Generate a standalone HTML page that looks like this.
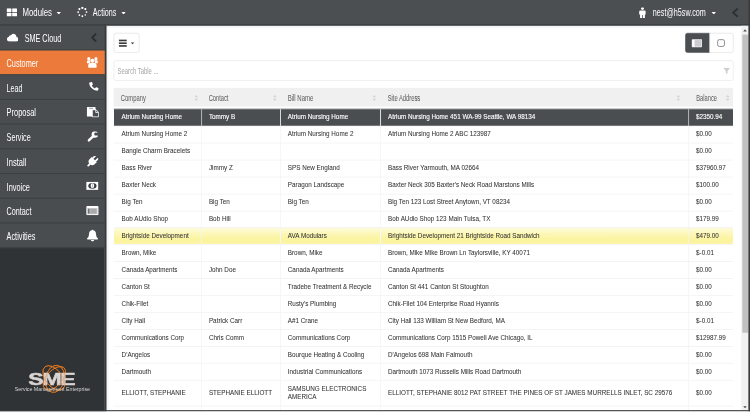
<!DOCTYPE html>
<html lang="en">
<head>
<meta charset="utf-8">
<title>SME Cloud - Customer</title>
<style>
html,body{margin:0;padding:0;width:750px;height:412px;overflow:hidden;background:#fff;}
body{font-family:"Liberation Sans",sans-serif;}
#app{-webkit-mask-image:linear-gradient(#000,#000);mask-image:linear-gradient(#000,#000);position:absolute;left:0;top:0;width:1366px;height:750px;transform:scale(0.54905);transform-origin:0 0;background:#fff;overflow:hidden;}
.cn{display:inline-block;transform:scaleX(var(--s,.7));transform-origin:0 50%;white-space:nowrap;}
/* top bar */
#top{position:absolute;left:0;top:0;width:1366px;height:47px;background:linear-gradient(to bottom,#4c4f52 0,#4c4f52 43.4px,#3f4245 43.4px,#3f4245 47px);color:#fff;font-size:18.5px;}
#top .it{position:absolute;top:0;height:47px;line-height:46px;}
#top svg{position:absolute;}
/* sidebar */
#side{position:absolute;left:0;top:47px;width:191px;height:703px;background:#2f3335;}
#sideR{position:absolute;left:191px;top:47px;width:2.7px;height:703px;background:#383b3e;}
#side .hd{position:relative;height:43px;border-bottom:2px solid #3d4043;background:#4b4e51;color:#fff;font-size:18.8px;line-height:48px;}
#side .mi{position:relative;height:43px;border-bottom:2px solid #3d4043;background:#4a4d50;color:#fff;font-size:18.8px;line-height:48px;}
#side .mi.act{background:#ec7a3a;}
#side .mi .cn,#side .hd .cn{position:absolute;left:12px;top:0;}
#side svg{position:absolute;}
/* main */
#main{position:absolute;left:193px;top:47px;width:1157px;height:701px;background:#fff;}
#shadowL{position:absolute;left:193.7px;top:47px;width:5px;height:700px;background:linear-gradient(to right,rgba(0,0,0,.06),rgba(0,0,0,0));}
#shadowT{position:absolute;left:193px;top:47px;width:1157px;height:4px;background:linear-gradient(to bottom,rgba(0,0,0,.07),rgba(0,0,0,0));}
.btn{position:absolute;box-sizing:border-box;border:1px solid #d9d9d9;border-radius:4px;background:#fff;}
#search{position:absolute;left:207px;top:110px;width:1129px;height:36.6px;box-sizing:border-box;border:1px solid #e2e2e2;border-radius:4px;color:#a5a5a5;font-size:16px;line-height:37px;}
#search .cn{position:absolute;left:6px;top:0;}
/* table */
#tbl{position:absolute;left:207px;top:160.3px;width:1128px;border-collapse:collapse;table-layout:fixed;font-size:11.5px;color:#333;-webkit-text-stroke:0.08px #333;}
#tbl th{height:38px;background:transparent;text-align:left;font-weight:normal;font-size:16px;color:#666;padding:0 0 0 13px;position:relative;}
#thbg{position:absolute;left:207px;top:159.5px;width:1128px;height:34.6px;background:#f0f0f0;}
#tbl td{height:29.29px;padding:0 0 0.6px 13px;border-top:1px solid #ececec;border-left:1px solid #efefef;white-space:nowrap;overflow:hidden;line-height:15px;}
#tbl td:first-child{border-left:none;padding-left:14.5px;}
#tbl tr.sel td{background:#4b4e51;color:#fff;-webkit-text-stroke:0.2px #fff;border-top-color:#4b4e51;border-left-color:#b8b8b8;}
#tbl tr.hl td{background:linear-gradient(to bottom,#fefcdc 0%,#fcf7b6 35%,#fbf39a 78%,#fcf6b4 100%);}
#tbl tr.tall td{height:45.6px;white-space:normal;line-height:15.6px;}
#tbl th svg{position:absolute;right:6px;top:13px;}
#tbl th .cn{position:relative;top:0.2px;}
/* scrollbar + frame */
#sb{position:absolute;left:1350px;top:47px;width:13px;height:700px;background:#f1f1f1;}
#sb .th{position:absolute;left:2px;top:16px;width:11px;height:543px;background:#c1c1c1;}
#frR{position:absolute;left:1363px;top:0;width:3px;height:750px;background:#3a3c3e;}
#frB{position:absolute;left:0;top:747px;width:1366px;height:2.4px;background:#3a3c3e;}
#frB2{position:absolute;left:0;top:749.2px;width:1366px;height:2px;background:#9a9a9a;}
</style>
</head>
<body>
<div id="app">

<div id="main"></div>
<div id="shadowT"></div>

<!-- toolbar -->
<div class="btn" style="left:207px;top:60px;width:47px;height:36px;">
  <svg width="47" height="36" viewBox="0 0 47 36" style="position:absolute;left:-1px;top:-1px">
    <rect x="9.6" y="12.2" width="14.2" height="3" fill="#3c3c3c"/><rect x="9.6" y="17.2" width="14.2" height="3" fill="#3c3c3c"/><rect x="9.6" y="22.2" width="14.2" height="3" fill="#3c3c3c"/>
    <path d="M31.2 17.2 L37.6 17.2 L34.4 20.8 Z" fill="#3c3c3c"/>
  </svg>
</div>
<div class="btn" style="left:1248.4px;top:60px;width:44.6px;height:36px;background:#4b4e51;border-color:#4b4e51;border-radius:4px 0 0 4px;">
  <svg width="44" height="36" viewBox="0 0 44 36" style="position:absolute;left:-1px;top:-1px">
    <rect x="12" y="11.4" width="18.6" height="14.6" rx="1.2" fill="#f2f2f2"/>
    <rect x="13.2" y="13.2" width="3" height="11.4" fill="#fff"/><rect x="17.4" y="13.2" width="12" height="11.4" fill="#c6c7c9"/>
    <path d="M17.4 16.1 H29.4 M17.4 19 H29.4 M17.4 21.9 H29.4" stroke="#dcdcdc" stroke-width=".8"/>
  </svg>
</div>
<div class="btn" style="left:1292px;top:60px;width:44px;height:36px;border-radius:0 4px 4px 0;">
  <svg width="44" height="36" viewBox="0 0 44 36" style="position:absolute;left:-1px;top:-1px">
    <rect x="15.1" y="12.2" width="12.4" height="12.4" rx="3" fill="none" stroke="#6a6d76" stroke-width="1.4"/>
  </svg>
</div>

<div id="search"><span class="cn" style="--s:.673">Search Table ...</span>
  <svg width="13" height="13" viewBox="0 0 16 16" style="position:absolute;right:5.5px;top:11.5px"><path d="M0.6 1 H15.4 L9.8 7.6 V15 L6.2 12.4 V7.6 Z" fill="#cdcdcd"/></svg>
</div>

<div id="thbg"></div>
<table id="tbl">
<colgroup><col style="width:160px"><col style="width:143.7px"><col style="width:182.5px"><col style="width:561px"><col style="width:80.8px"></colgroup>
<thead><tr>
<th><span class="cn" style="--s:.668">Company</span><svg width="7" height="11" viewBox="0 0 8 13" style="right:6.3px"><path d="M4 0 L8 5 H0 Z M4 13 L8 8 H0 Z" fill="#d2d2d2"/></svg></th>
<th><span class="cn" style="--s:.654">Contact</span><svg width="7" height="11" viewBox="0 0 8 13" style="right:6.9px"><path d="M4 0 L8 5 H0 Z M4 13 L8 8 H0 Z" fill="#d2d2d2"/></svg></th>
<th><span class="cn" style="--s:.681">Bill Name</span><svg width="7" height="11" viewBox="0 0 8 13" style="right:8.2px"><path d="M4 0 L8 5 H0 Z M4 13 L8 8 H0 Z" fill="#d2d2d2"/></svg></th>
<th><span class="cn" style="--s:.661">Site Address</span><svg width="7" height="11" viewBox="0 0 8 13" style="right:15.3px"><path d="M4 0 L8 5 H0 Z M4 13 L8 8 H0 Z" fill="#d2d2d2"/></svg></th>
<th><span class="cn" style="--s:.655;left:1px">Balance</span><svg width="7" height="11" viewBox="0 0 8 13" style="right:5.6px"><path d="M4 0 L8 5 H0 Z M4 13 L8 8 H0 Z" fill="#d2d2d2"/></svg></th>
</tr></thead>
<tbody>
<tr class="sel"><td>Atrium Nursing Home</td><td>Tommy B</td><td>Atrium Nursing Home</td><td>Atrium Nursing Home 451 WA-99 Seattle, WA 98134</td><td>$2350.94</td></tr>
<tr><td>Atrium Nursing Home 2</td><td></td><td>Atrium Nursing Home 2</td><td>Atrium Nursing Home 2 ABC 123987</td><td>$0.00</td></tr>
<tr><td>Bangle Charm Bracelets</td><td></td><td></td><td></td><td>$0.00</td></tr>
<tr><td>Bass River</td><td>Jimmy Z</td><td>SPS New England</td><td>Bass River Yarmouth, MA 02664</td><td>$37960.97</td></tr>
<tr><td>Baxter Neck</td><td></td><td>Paragon Landscape</td><td>Baxter Neck 305 Baxter's Neck Road Marstons Mills</td><td>$100.00</td></tr>
<tr><td>Big Ten</td><td>Big Ten</td><td>Big Ten</td><td>Big Ten 123 Lost Street Anytown, VT 08234</td><td>$0.00</td></tr>
<tr><td>Bob AUdio Shop</td><td>Bob Hill</td><td></td><td>Bob AUdio Shop 123 Main Tulsa, TX</td><td>$179.99</td></tr>
<tr class="hl"><td>Brightside Development</td><td></td><td>AVA Modulars</td><td>Brightside Development 21 Brightside Road Sandwich</td><td>$479.00</td></tr>
<tr><td>Brown, Mike</td><td></td><td>Brown, Mike</td><td>Brown, Mike Mike Brown Ln Taylorsville, KY 40071</td><td>$-0.01</td></tr>
<tr><td>Canada Apartments</td><td>John Doe</td><td>Canada Apartments</td><td>Canada Apartments</td><td>$0.00</td></tr>
<tr><td>Canton St</td><td></td><td>Tradebe Treatment &amp; Recycle</td><td>Canton St 441 Canton St Stoughton</td><td>$0.00</td></tr>
<tr><td>Chik-Filet</td><td></td><td>Rusty's Plumbing</td><td>Chik-Filet 104 Enterprise Road Hyannis</td><td>$0.00</td></tr>
<tr><td>City Hall</td><td>Patrick Carr</td><td>A#1 Crane</td><td>City Hall 133 William St New Bedford, MA</td><td>$-0.01</td></tr>
<tr><td>Communications Corp</td><td>Chris Comm</td><td>Communications Corp</td><td>Communications Corp 1515 Powell Ave Chicago, IL</td><td>$12987.99</td></tr>
<tr><td>D'Angelos</td><td></td><td>Bourque Heating &amp; Cooling</td><td>D'Angelos 698 Main Falmouth</td><td>$0.00</td></tr>
<tr><td>Dartmouth</td><td></td><td>Industrial Communications</td><td>Dartmouth 1073 Russells Mills Road Dartmouth</td><td>$0.00</td></tr>
<tr class="tall"><td>ELLIOTT, STEPHANIE</td><td>STEPHANIE ELLIOTT</td><td>SAMSUNG ELECTRONICS AMERICA</td><td>ELLIOTT, STEPHANIE 8012 PAT STREET THE PINES OF ST JAMES MURRELLS INLET, SC 29576</td><td>$0.00</td></tr>
<tr><td>&nbsp;</td><td></td><td></td><td></td><td></td></tr>
</tbody>
</table>

<!-- sidebar -->
<div style="position:absolute;left:0;top:40px;width:193px;height:60px;background:#45484b;"></div>
<div id="side">
  <div class="hd"><span class="cn" style="left:45px;--s:.70">SME Cloud</span>
    <svg style="left:12px;top:13.4px" width="21.4" height="15.6" viewBox="0 0 22 16"><path d="M5 16 A4.6 4.6 0 0 1 4.2 6.9 A3.6 3.6 0 0 1 8.4 4.2 A5.6 5.6 0 0 1 18.6 7.4 A4.3 4.3 0 0 1 17.6 16 Z" fill="#fff"/></svg>
    <svg style="left:164.6px;top:13px" width="12" height="17" viewBox="0 0 12 17"><path d="M10 1.4 L3 8.5 L10 15.6" fill="none" stroke="#2b2e30" stroke-width="3.3"/></svg>
  </div>
  <div class="mi act"><span class="cn" style="--s:.709">Customer</span>
    <svg style="left:157.5px;top:12px" width="20.6" height="19.5" viewBox="0 0 20.6 19.5">
      <circle cx="3.7" cy="2.9" r="2.9" fill="#fff"/><circle cx="16.8" cy="2.9" r="2.9" fill="#fff"/>
      <path d="M0 11 V8.4 Q0 5.6 2.6 5.6 H6.6 Q5 8 6.2 11 Z M20.6 11 V8.4 Q20.6 5.6 18 5.6 H14 Q15.6 8 14.4 11 Z" fill="#fff"/>
      <circle cx="10.3" cy="6.6" r="3.8" fill="#fff"/>
      <path d="M3.8 19.5 Q2.6 19.5 2.6 18.2 V15.4 Q2.6 10.9 6.6 10.9 H14 Q18 10.9 18 15.4 V18.2 Q18 19.5 16.8 19.5 Z" fill="#fff"/>
    </svg>
  </div>
  <div class="mi"><span class="cn" style="--s:.69">Lead</span>
    <svg style="left:161.5px;top:12px" width="18" height="16.5" viewBox="0 0 18 16.5"><path d="M1.2 1.4 L4.6 0.3 Q5.4 0.2 5.8 1 L7 4.4 Q7.2 5.2 6.5 5.8 L5 6.9 Q6.8 10.6 11 12 L12.3 10.4 Q12.9 9.8 13.7 10.1 L17 11.5 Q17.8 12 17.6 12.8 L16.6 15.4 Q16.3 16.3 15.2 16.3 Q9 16 4.6 11.4 Q0.6 7 0.4 2.6 Q0.4 1.7 1.2 1.4 Z" fill="#fff"/></svg>
  </div>
  <div class="mi"><span class="cn" style="--s:.723">Proposal</span>
    <svg style="left:157.5px;top:12.5px" width="22.6" height="19" viewBox="0 0 22.6 19">
      <rect x="0" y="0" width="16" height="17.4" rx="1.2" fill="#fff"/>
      <rect x="4.4" y="1.2" width="7" height="2.2" fill="#a4a6a8"/>
      <path d="M10 4.8 H16.8 L21.6 9.6 V18 H10 Z" fill="#4a4d50" stroke="#fff" stroke-width="1.7" stroke-linejoin="round"/>
      <path d="M16.4 5 V10 H21.4" fill="none" stroke="#fff" stroke-width="1.5"/>
    </svg>
  </div>
  <div class="mi"><span class="cn" style="--s:.70">Service</span>
    <svg style="left:159.4px;top:12.4px" width="21" height="20" viewBox="0 0 21 20">
      <path d="M11.4 8.6 L2.8 16.6" fill="none" stroke="#fff" stroke-width="4.6" stroke-linecap="round"/>
      <circle cx="13.8" cy="5.9" r="5.9" fill="#fff"/>
      <path d="M12.6 5.2 A2.5 2.5 0 0 1 16.6 3.0 L21 1.6 V8.2 L16.4 7.6 A2.5 2.5 0 0 1 12.6 5.2 Z" fill="#4a4d50"/>
    </svg>
  </div>
  <div class="mi"><span class="cn" style="--s:.735">Install</span>
    <svg style="left:157.9px;top:12px" width="21.5" height="20" viewBox="0 0 21.5 20">
      <g transform="translate(10.4 9.9) rotate(45)" fill="#fff">
        <rect x="-5" y="-11.4" width="2.9" height="8" rx="1.4"/><rect x="2.1" y="-11.4" width="2.9" height="8" rx="1.4"/>
        <path d="M-6.6 -4.6 H6.6 V0.4 A6.6 6.6 0 0 1 -6.6 0.4 Z"/>
        <rect x="-1.6" y="5" width="3.2" height="7.4" rx="1"/>
      </g>
    </svg>
  </div>
  <div class="mi"><span class="cn" style="--s:.715">Invoice</span>
    <svg style="left:156.8px;top:14.2px" width="22.6" height="14.8" viewBox="0 0 22.6 14.8">
      <rect x="0" y="0" width="22.6" height="14.8" fill="#fff"/>
      <ellipse cx="11.3" cy="7.4" rx="7.6" ry="5.3" fill="#3a3d40"/>
      <ellipse cx="11.3" cy="7.4" rx="3.3" ry="4.5" fill="#fff"/>
      <rect x="10.7" y="4.6" width="1.2" height="5.6" fill="#9a9c9e"/>
    </svg>
  </div>
  <div class="mi"><span class="cn" style="--s:.70">Contact</span>
    <svg style="left:157px;top:12.5px" width="22.5" height="17" viewBox="0 0 22.5 17">
      <rect x="0" y="0" width="22.5" height="17" rx="2.2" fill="#fff"/>
      <rect x="1.8" y="4" width="18.9" height="11.2" fill="#c9c9cb"/>
      <rect x="3.6" y="5.2" width="2.2" height="8.8" fill="#5b5e61"/>
      <rect x="7.4" y="5.2" width="11.4" height="8.8" fill="#8e9092" opacity=".55"/>
    </svg>
  </div>
  <div class="mi"><span class="cn" style="--s:.709">Activities</span>
    <svg style="left:158px;top:10.5px" width="21" height="22" viewBox="0 0 21 22">
      <path d="M10.5 0 Q11.9 0 11.9 1.5 Q16.8 2.6 16.8 8.4 Q16.8 14 20.6 16.6 Q20.6 18.2 19 18.2 H2 Q0.4 18.2 0.4 16.6 Q4.2 14 4.2 8.4 Q4.2 2.6 9.1 1.5 Q9.1 0 10.5 0 Z" fill="#fff"/>
      <path d="M7.6 19 H13.4 Q13.2 21.8 10.5 21.8 Q7.8 21.8 7.6 19 Z" fill="#fff"/>
    </svg>
  </div>
  <!-- logo -->
  <svg style="left:20px;top:600px" width="160" height="90" viewBox="0 0 160 90">
    <g fill="none" stroke="#ee7a1c" stroke-width="1.5">
      <ellipse cx="78" cy="41.5" rx="15" ry="26" transform="rotate(-38 78 41.5)"/>
      <ellipse cx="79" cy="42" rx="14" ry="26" transform="rotate(42 79 42)"/>
      <ellipse cx="80" cy="43" rx="17" ry="25" transform="rotate(12 80 43)"/>
    </g>
    <text transform="translate(31.6 53.6) scale(1.33 1)" font-family="'Liberation Sans',sans-serif" font-weight="bold" font-size="31.6" letter-spacing="-1.8" fill="#dbd4d2" stroke="#dbd4d2" stroke-width="0.9">SME</text>
    <g fill="none" stroke="#ee7a1c" stroke-width="1.4" opacity=".45">
      <ellipse cx="78" cy="41.5" rx="15" ry="26" transform="rotate(-38 78 41.5)"/>
      <ellipse cx="79" cy="42" rx="14" ry="26" transform="rotate(42 79 42)"/>
      <ellipse cx="80" cy="43" rx="17" ry="25" transform="rotate(12 80 43)"/>
    </g>
    <text x="7" y="65.6" font-family="'Liberation Sans',sans-serif" font-size="8.6" fill="#d6d6d6" textLength="137" lengthAdjust="spacingAndGlyphs">Service Management Enterprise</text>
  </svg>
</div>
<div id="sideR"></div>
<div id="shadowL"></div>

<!-- top bar -->
<div id="top">
  <svg style="left:12.4px;top:14.6px" width="19" height="15" viewBox="0 0 19 15"><rect x="0" y="0" width="8.8" height="6.8" rx="1" fill="#fff"/><rect x="10.2" y="0" width="8.8" height="6.8" rx="1" fill="#fff"/><rect x="0" y="8.2" width="8.8" height="6.8" rx="1" fill="#fff"/><rect x="10.2" y="8.2" width="8.8" height="6.8" rx="1" fill="#fff"/></svg>
  <div class="it" style="left:41px"><span class="cn" style="--s:.768">Modules</span></div>
  <svg style="left:102.5px;top:21.8px" width="8" height="4.4" viewBox="0 0 8 4.4"><path d="M0 0 H8 L4 4.4 Z" fill="#fff"/></svg>
  <svg style="left:139.7px;top:11.9px" width="20" height="20" viewBox="-10 -10 20 20" fill="#fff">
    <circle cx="0" cy="-7.6" r="2.1"/><circle cx="5.4" cy="-5.4" r="2.0"/><circle cx="7.6" cy="0" r="1.6"/><circle cx="5.4" cy="5.4" r="1.5"/><circle cx="0" cy="7.6" r="1.6"/><circle cx="-5.4" cy="5.4" r="1.6"/><circle cx="-7.6" cy="0" r="1.7"/><circle cx="-5.4" cy="-5.4" r="1.9"/>
  </svg>
  <div class="it" style="left:169px"><span class="cn" style="--s:.705">Actions</span></div>
  <svg style="left:221px;top:21.8px" width="8" height="4.4" viewBox="0 0 8 4.4"><path d="M0 0 H8 L4 4.4 Z" fill="#fff"/></svg>
  <svg style="left:1163.6px;top:12.6px" width="12.4" height="20" viewBox="0 0 12.4 20"><circle cx="6.2" cy="2.6" r="2.6" fill="#fff"/><path d="M2.4 6 H10 Q12.4 6 12.4 8.4 V13.4 H10.6 V20 H6.9 V14.4 H5.5 V20 H1.8 V13.4 H0 V8.4 Q0 6 2.4 6 Z" fill="#fff"/></svg>
  <div class="it" style="left:1189px"><span class="cn" style="--s:.71">nest@h5sw.com</span></div>
  <svg style="left:1295.5px;top:21.8px" width="8" height="4.4" viewBox="0 0 8 4.4"><path d="M0 0 H8 L4 4.4 Z" fill="#fff"/></svg>
  <svg style="left:1332px;top:14px" width="14" height="18" viewBox="0 0 14 18"><path d="M11.6 1.4 L3.4 9 L11.6 16.6" fill="none" stroke="#2e3133" stroke-width="3.4"/></svg>
</div>

<div id="sb"><div class="th"></div><svg width="13" height="700" viewBox="0 0 13 700" style="position:absolute;left:0;top:0"><path d="M3.6 10.2 L6.9 6.4 L10.2 10.2 Z M3.6 692.8 L6.9 696.6 L10.2 692.8 Z" fill="#505050"/></svg></div>
<div id="frR"></div><div id="frB"></div><div id="frB2"></div>
</div>
</body>
</html>
